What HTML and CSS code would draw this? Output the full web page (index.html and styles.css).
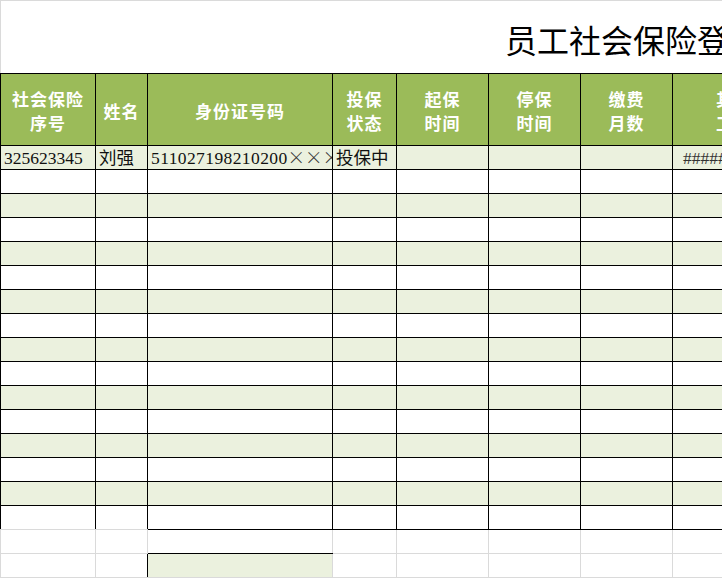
FILE: index.html
```html
<!DOCTYPE html>
<html lang="zh">
<head>
<meta charset="utf-8">
<link rel="stylesheet" href="styles.css">
</head>
<body>
<div class="sheet">
  <div class="title">员工社会保险登记表</div>
  <table class="grid">
    <colgroup>
      <col class="c1"><col class="c2"><col class="c3"><col class="c4"><col class="c5"><col class="c6"><col class="c7"><col class="c8">
    </colgroup>
    <thead>
      <tr class="head">
        <th>社会保险<br>序号</th>
        <th>姓名</th>
        <th>身份证号码</th>
        <th>投保<br>状态</th>
        <th>起保<br>时间</th>
        <th>停保<br>时间</th>
        <th>缴费<br>月数</th>
        <th>其他<br>工龄</th>
      </tr>
    </thead>
    <tbody>
      <tr class="g"><td>325623345</td><td>刘强</td><td class="id">511027198210200<span class="cjk">××××</span></td><td>投保中</td><td></td><td></td><td></td><td class="hash">########</td></tr>
      <tr class="w"><td></td><td></td><td></td><td></td><td></td><td></td><td></td><td></td></tr>
      <tr class="g"><td></td><td></td><td></td><td></td><td></td><td></td><td></td><td></td></tr>
      <tr class="w"><td></td><td></td><td></td><td></td><td></td><td></td><td></td><td></td></tr>
      <tr class="g"><td></td><td></td><td></td><td></td><td></td><td></td><td></td><td></td></tr>
      <tr class="w"><td></td><td></td><td></td><td></td><td></td><td></td><td></td><td></td></tr>
      <tr class="g"><td></td><td></td><td></td><td></td><td></td><td></td><td></td><td></td></tr>
      <tr class="w"><td></td><td></td><td></td><td></td><td></td><td></td><td></td><td></td></tr>
      <tr class="g"><td></td><td></td><td></td><td></td><td></td><td></td><td></td><td></td></tr>
      <tr class="w"><td></td><td></td><td></td><td></td><td></td><td></td><td></td><td></td></tr>
      <tr class="g"><td></td><td></td><td></td><td></td><td></td><td></td><td></td><td></td></tr>
      <tr class="w"><td></td><td></td><td></td><td></td><td></td><td></td><td></td><td></td></tr>
      <tr class="g"><td></td><td></td><td></td><td></td><td></td><td></td><td></td><td></td></tr>
      <tr class="w"><td></td><td></td><td></td><td></td><td></td><td></td><td></td><td></td></tr>
      <tr class="g"><td></td><td></td><td></td><td></td><td></td><td></td><td></td><td></td></tr>
      <tr class="w"><td class="gb"></td><td class="gb"></td><td></td><td></td><td></td><td></td><td></td><td></td></tr>
      <tr class="x"><td></td><td></td><td class="bb"></td><td></td><td></td><td></td><td></td><td></td></tr>
      <tr class="x"><td></td><td class="br"></td><td class="fill"></td><td></td><td></td><td></td><td></td><td></td></tr>
    </tbody>
  </table>
</div>
</body>
</html>
```
FILE: styles.css
```css
html, body {
  margin: 0;
  padding: 0;
  background: #fff;
  overflow: hidden;
}
.sheet {
  width: 722px;
  height: 578px;
  overflow: hidden;
}
.title {
  height: 73px;
  box-sizing: border-box;
  border-top: 1px solid #dadada;
  border-left: 1px solid #dadada;
  padding: 4px 0 0 504px;
  line-height: 68px;
  font-family: "Noto Sans CJK SC", sans-serif;
  font-size: 32px;
  color: #000;
  white-space: nowrap;
  overflow: hidden;
}
.grid {
  border-collapse: collapse;
  table-layout: fixed;
  width: 795px;
}
.c1 { width: 95px; }
.c2 { width: 52px; }
.c3 { width: 185px; }
.c4 { width: 64px; }
.c5 { width: 92px; }
.c6 { width: 92px; }
.c7 { width: 92px; }
.c8 { width: 123px; }
.grid th, .grid td {
  border: 1px solid #000;
  padding: 0;
  overflow: hidden;
  white-space: nowrap;
}
.head {
  height: 72px;
}
.grid .head th {
  background: #9bbb59;
  color: #fff;
  font-family: "Noto Sans CJK SC", sans-serif;
  font-weight: 700;
  font-size: 17px;
  line-height: 24px;
  letter-spacing: 1px;
  text-align: center;
  vertical-align: middle;
  padding-top: 2px;
}
tbody tr {
  height: 24px;
}
.grid tbody td {
  font-family: "Liberation Serif", "Noto Sans CJK SC", serif;
  font-size: 17.5px;
  line-height: 22px;
  color: #111;
  padding-left: 3px;
  text-overflow: clip;
}
.grid td.id {
  letter-spacing: 0.4px;
}
.cjk {
  font-family: "Noto Sans CJK SC", sans-serif;
  font-weight: 300;
  letter-spacing: 0;
  color: #333;
}
tr.g td { background: #ebf1de; }
tr.w td { background: #fff; }
.grid td.hash {
  padding-left: 10px;
  color: #333;
}
td.gb { border-bottom-color: #dadada; }
tr.x td {
  background: #fff;
  border-color: #dadada;
}
tr.x td.bb { border-bottom-color: #000; }
tr.x td.br { border-right-color: #000; }
tr.x td.fill {
  background: #ebf1de;
  border-top-color: #000;
  border-left-color: #000;
}
```
